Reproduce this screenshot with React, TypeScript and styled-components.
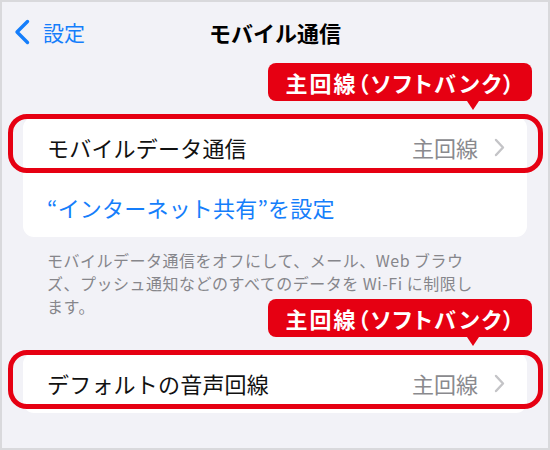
import React from 'react';
import styled, { createGlobalStyle } from 'styled-components';

const GlobalStyle = createGlobalStyle`
  html, body {
    margin: 0;
    padding: 0;
    background: #f2f2f7;
  }
  * {
    box-sizing: border-box;
  }
`;

const Frame = styled.div`
  width: 550px;
  height: 450px;
  border: 2px solid #d9d9dc;
  background: #f2f2f7;
  font-family: 'Noto Sans CJK JP', 'Noto Sans', sans-serif;
  overflow: hidden;
`;

const NavBar = styled.div`
  height: 60px;
  display: grid;
  grid-template-columns: 1fr auto 1fr;
  align-items: center;
`;

const BackButton = styled.div`
  display: flex;
  align-items: center;
  gap: 12px;
  padding-left: 11px;
  color: #157efb;
  font-size: 21px;
`;

const Title = styled.div`
  font-size: 22px;
  font-weight: 700;
  color: #000;
`;

const Card = styled.div<{ $top: number }>`
  margin: ${(p) => p.$top}px 21px 0;
  background: #fff;
  border-radius: 11px;
`;

const Row = styled.div`
  position: relative;
  height: 60px;
  display: flex;
  align-items: center;
  padding: 0 22px 0 24px;
  font-size: 22px;
`;

const Label = styled.span<{ $link?: boolean }>`
  flex: 1;
  color: ${(p) => (p.$link ? '#157efb' : '#111')};
  letter-spacing: 0.2px;
`;

const Value = styled.span`
  color: #8a8a8e;
  margin-right: 16px;
`;

const Outline = styled.div`
  position: absolute;
  left: -15px;
  right: -16px;
  top: -3px;
  height: 59px;
  border: 5px solid #e60012;
  border-radius: 19px;
  pointer-events: none;
`;

const Callout = styled.div`
  position: absolute;
  right: -5px;
  bottom: calc(100% + 16px);
  height: 38px;
  padding: 0 16px 0 18px;
  display: flex;
  align-items: center;
  background: #e60012;
  border-radius: 8px;
  color: #fff;
  font-size: 22px;
  font-weight: 700;
  white-space: nowrap;
  font-feature-settings: 'palt';
  letter-spacing: 2px;

  &::after {
    content: '';
    position: absolute;
    right: 53px;
    top: 100%;
    border-left: 6px solid transparent;
    border-right: 6px solid transparent;
    border-top: 9px solid #e60012;
  }
`;

const Footnote = styled.p`
  margin: 12px 0 0;
  padding-left: 45px;
  font-size: 16px;
  line-height: 23px;
  color: #86868b;
  letter-spacing: 0.5px;
  white-space: nowrap;
`;

const ChevronLeft = () => (
  <svg width="18" height="26" viewBox="0 0 18 26">
    <path d="M14.5 2.5 L4 13 L14.5 23.5" fill="none" stroke="#157efb" strokeWidth="3.4" strokeLinecap="round" strokeLinejoin="round" />
  </svg>
);

const ChevronRight = () => (
  <svg width="11" height="19" viewBox="0 0 11 19">
    <path d="M2 2 L9 9.5 L2 17" fill="none" stroke="#c4c4c7" strokeWidth="2.4" strokeLinecap="round" strokeLinejoin="round" />
  </svg>
);

const BADGE = '主回線（ソフトバンク）';

export default function App() {
  return (
    <>
      <GlobalStyle />
      <Frame>
        <NavBar>
          <BackButton>
            <ChevronLeft />
            設定
          </BackButton>
          <Title>モバイル通信</Title>
          <div />
        </NavBar>

        <Card $top={55}>
          <Row>
            <Label>モバイルデータ通信</Label>
            <Value>主回線</Value>
            <ChevronRight />
            <Outline />
            <Callout>{BADGE}</Callout>
          </Row>
          <Row>
            <Label $link>“インターネット共有”を設定</Label>
          </Row>
        </Card>

        <Footnote>
          モバイルデータ通信をオフにして、メール、Web ブラウ
          <br />
          ズ、プッシュ通知などのすべてのデータを Wi-Fi に制限し
          <br />
          ます。
        </Footnote>

        <Card $top={35}>
          <Row>
            <Label>デフォルトの音声回線</Label>
            <Value>主回線</Value>
            <ChevronRight />
            <Outline />
            <Callout>{BADGE}</Callout>
          </Row>
        </Card>
      </Frame>
    </>
  );
}
